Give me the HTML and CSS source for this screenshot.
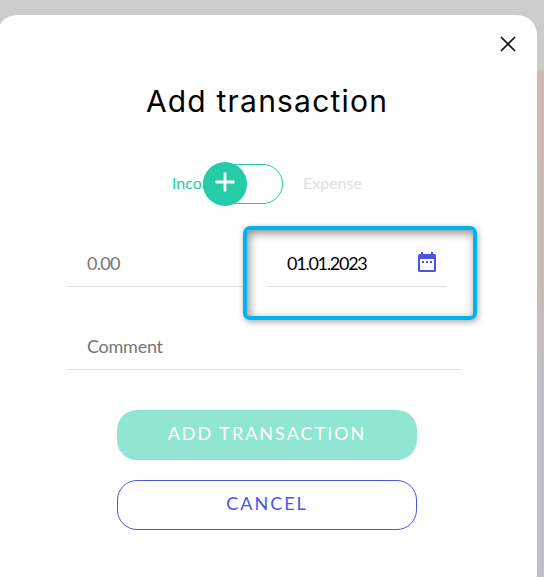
FILE: index.html
```
<!DOCTYPE html>
<html lang="en">
<head>
<meta charset="utf-8">
<title>Add transaction</title>
<link rel="stylesheet" href="styles.css">
</head>
<body>
<main class="modal">
  <button class="close" aria-label="Close">
    <svg width="16" height="16" viewBox="0 0 16 16"><path d="M1.5 1.5l13 13M14.5 1.5l-13 13" stroke="#111" stroke-width="1.7" stroke-linecap="round"/></svg>
  </button>
  <h1 class="title">Add transaction</h1>
  <div class="switch">
    <span class="income">Income</span>
    <div class="track"><div class="knob">
      <svg width="20" height="20" viewBox="0 0 20 20"><path d="M10 .5v19M.5 10h19" stroke="#fff" stroke-width="2.8"/></svg>
    </div></div>
    <span class="expense">Expense</span>
  </div>
  <div class="row">
    <div class="field amount"><span>0.00</span></div>
    <div class="field date"><span class="date-value">01.01.2023</span>
      <svg class="calendar" width="18" height="20" viewBox="0 0 18 20" fill="#4a56e2"><path fill-rule="evenodd" d="M3 0h2v2h8V0h2v2h1.500a1.500 1.500 0 0 1 1.500 1.500v15a1.500 1.500 0 0 1-1.500 1.500h-15a1.500 1.500 0 0 1-1.500-1.500v-15a1.500 1.500 0 0 1 1.500-1.500h1.500zM2 7v11h14V7z"/><path d="M4 9h2v2H4zM8 9h2v2H8zM12 9h2v2h-2z"/></svg>
      <div class="highlight"></div>
    </div>
  </div>
  <div class="field comment"><span>Comment</span></div>
  <div class="actions">
    <button class="btn add">ADD TRANSACTION</button>
    <button class="btn cancel">CANCEL</button>
  </div>
</main>
</body>
</html>
```
FILE: styles.css
```
* { box-sizing: border-box; }
html, body { margin: 0; height: 100%; overflow: hidden; }
body {
  padding-top: 15px;
  background: linear-gradient(#ccc 0 70px, #cdb9b6 70px, #cbb9b8 260px, #c1c0c4 370px, #c0c0c6);
  font-family: Lato, sans-serif;
  font-size: 18px;
}
button { font: inherit; padding: 0; background: none; border: 0; }
.modal {
  position: relative;
  width: 540px;
  height: 578px;
  margin-left: -3px;
  padding: 66px 70px 0;
  background: #fff;
  border-radius: 20px;
}
.close { position: absolute; top: 21px; right: 21px; width: 16px; height: 16px; }
.close svg, .knob svg { display: block; }
.title {
  margin: 0;
  text-align: center;
  font: 400 30px/40px Inter, sans-serif;
  letter-spacing: 1.2px;
  color: #000;
  white-space: nowrap;
}
.switch { display: flex; align-items: center; height: 40px; margin: 43px 0 0 105px; font-size: 16px; }
.income { width: 31px; padding-bottom: 3px; color: #24cca7; white-space: nowrap; }
.track { width: 80px; height: 40px; border: 1px solid #24cca7; border-radius: 20px; position: relative; }
.knob { display: flex; justify-content: center; padding-top: 10px; width: 44px; height: 44px; margin: -3px 0 0 -1px; background: #24cca7; border-radius: 50%; }
.expense { margin-left: 20px; padding-bottom: 3px; color: #e0e0e0; }
.row { display: flex; gap: 20px; margin-top: 40px; }
.field { display: flex; align-items: center; justify-content: space-between; height: 43px; padding: 0 20px 4px; border-bottom: 1px solid #e0e0e0; color: #757575; letter-spacing: -.25px; }
.amount { width: 180px; letter-spacing: -.7px; }
.date { position: relative; width: 180px; padding-right: 11px; color: #000; }
.date-value { letter-spacing: -1.25px; }
.calendar { margin-top: -3px; }
.highlight {
  position: absolute;
  top: -18px;
  left: -24px;
  width: 234px;
  height: 94px;
  border: 4px solid #00b2ef;
  border-radius: 7px;
  box-shadow: 1px 2px 6px rgba(0,0,0,.35), inset 2px 3px 10px rgba(0,0,0,.45);
}
.comment { width: 394px; margin-top: 40px; }
.actions { display: flex; flex-direction: column; align-items: center; gap: 20px; margin-top: 40px; }
.btn { width: 300px; height: 50px; border-radius: 20px; letter-spacing: 2px; padding-bottom: 4px; }
.add { background: #91e6d3; color: #fff; }
.cancel { border: 1px solid #4a56e2; color: #4a56e2; }
```
